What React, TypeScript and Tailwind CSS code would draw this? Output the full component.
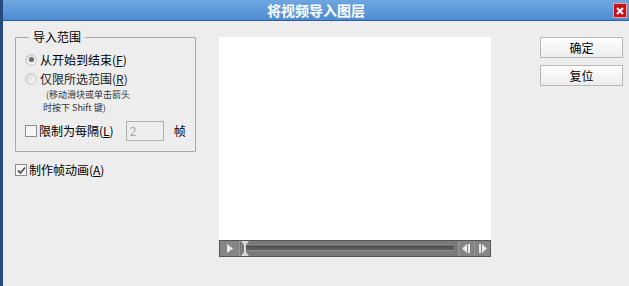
import { FC } from "react";

const cjk = { fontFamily: '"Noto Sans CJK SC", "Liberation Sans", sans-serif' };

const Radio: FC<{ checked?: boolean }> = ({ checked }) => (
  <span className="w-[12px] h-[12px] rounded-full border border-[#c8c8c8] bg-gradient-to-br from-[#d8d8d8] to-[#fafafa] flex items-center justify-center shrink-0">
    {checked && <span className="w-[5px] h-[5px] rounded-full bg-[#6b6b6b]" />}
  </span>
);

const Check: FC<{ checked?: boolean }> = ({ checked }) => (
  <span className="w-[12px] h-[12px] border border-[#8c8c8c] bg-[#f6f6f6] flex items-center justify-center shrink-0">
    {checked && (
      <svg width="9" height="9" viewBox="0 0 9 9">
        <path d="M1 4.5 L3.5 7 L8 1.5" stroke="#555" strokeWidth="1.8" fill="none" />
      </svg>
    )}
  </span>
);

const Button: FC<{ label: string }> = ({ label }) => (
  <div className="w-[83px] h-[21px] border border-[#b8b8b8] bg-gradient-to-b from-[#ffffff] to-[#ececec] flex items-center justify-center text-[12px] text-black">
    {label}
  </div>
);

const App: FC = () => {
  return (
    <div className="w-[629px] h-[286px] flex flex-col bg-[#ededed] overflow-hidden" style={cjk}>
      <div className="h-[21px] flex items-center relative bg-gradient-to-b from-[#6ea7e0] to-[#4d8cd2] border-b border-[#2e5f9c] border-l-[3px] border-l-[#24497a]">
        <div className="flex-1 text-center text-white font-bold text-[14px] leading-none">将视频导入图层</div>
        <div className="absolute right-[2px] top-[3px] w-[14px] h-[15px] bg-[#c8101a] border border-[#f0a0a0] flex items-center justify-center">
          <svg width="8" height="8" viewBox="0 0 8 8">
            <path d="M1 1 L7 7 M7 1 L1 7" stroke="#fff" strokeWidth="2" />
          </svg>
        </div>
      </div>
      <div className="flex-1 flex border-l-[3px] border-l-[#24497a]">
        <div className="w-[205px] pl-[12px] pt-[16px] flex flex-col">
          <div className="relative w-[181px] h-[115px] border border-[#a8a8a8] rounded-[1px] pl-[9px] pt-[12px] text-[12px] text-black">
            <span className="absolute left-[13px] top-[-9px] bg-[#ededed] px-[4px] leading-[16px]">导入范围</span>
            <div className="flex items-center gap-[3px] h-[19px]">
              <Radio checked />
              <span className="whitespace-nowrap">从开始到结束(<u>F</u>)</span>
            </div>
            <div className="flex items-center gap-[3px] h-[19px] text-[#222]">
              <Radio />
              <span className="whitespace-nowrap">仅限所选范围(<u>R</u>)</span>
            </div>
            <div className="pl-[18px] text-[9px] leading-[13px] text-[#333] whitespace-nowrap">
              <div className="pl-[3px]">(移动滑块或单击箭头</div>
              <div>时按下 Shift 键)</div>
            </div>
            <div className="flex items-center mt-[7px]">
              <Check />
              <span className="ml-[2px] whitespace-nowrap">限制为每隔(<u>L</u>)</span>
              <div className="ml-[12px] w-[38px] h-[20px] border border-[#b0b0b0] text-[#a8a8a8] pl-[3px] leading-[18px] shrink-0">2</div>
              <span className="ml-[10px]">帧</span>
            </div>
          </div>
          <div className="flex items-center mt-[9px] text-[12px] text-black">
            <Check checked />
            <span className="ml-[2px]">制作帧动画(<u>A</u>)</span>
          </div>
        </div>
        <div className="pt-[16px] pl-[11px] flex flex-col">
          <div className="w-[272px] h-[203px] bg-white" />
          <div className="w-[272px] h-[17px] bg-[#7a7a7a] border border-[#555] flex items-stretch">
            <div className="w-[20px] flex items-center justify-center border-r border-[#9a9a9a] bg-[#858585]">
              <svg width="8" height="9" viewBox="0 0 8 9"><path d="M1 0 L7 4.5 L1 9 Z" fill="#e8e8e8" /></svg>
            </div>
            <div className="flex-1 flex items-center relative px-[4px]">
              <div className="flex-1 h-[5px] bg-[#5c5c5c] border-t border-[#444] border-b border-b-[#8e8e8e]" />
              <svg className="absolute left-[1px] top-0" width="8" height="15" viewBox="0 0 8 15">
                <path d="M0 0 H8 L5 4 V11 L8 15 H0 L3 11 V4 Z" fill="#d8d8d8" />
              </svg>
            </div>
            <div className="w-[16px] flex items-center justify-center border-l border-[#9a9a9a] bg-[#858585]">
              <svg width="9" height="9" viewBox="0 0 9 9"><path d="M5 0 L0 4.5 L5 9 Z M6 0 H8 V9 H6 Z" fill="#e8e8e8" /></svg>
            </div>
            <div className="w-[16px] flex items-center justify-center border-l border-[#9a9a9a] bg-[#858585]">
              <svg width="9" height="9" viewBox="0 0 9 9"><path d="M1 0 H3 V9 H1 Z M4 0 L9 4.5 L4 9 Z" fill="#e8e8e8" /></svg>
            </div>
          </div>
        </div>
        <div className="flex-1 pt-[16px] pl-[49px] flex flex-col gap-[7px]">
          <Button label="确定" />
          <Button label="复位" />
        </div>
      </div>
    </div>
  );
};

export default App;
